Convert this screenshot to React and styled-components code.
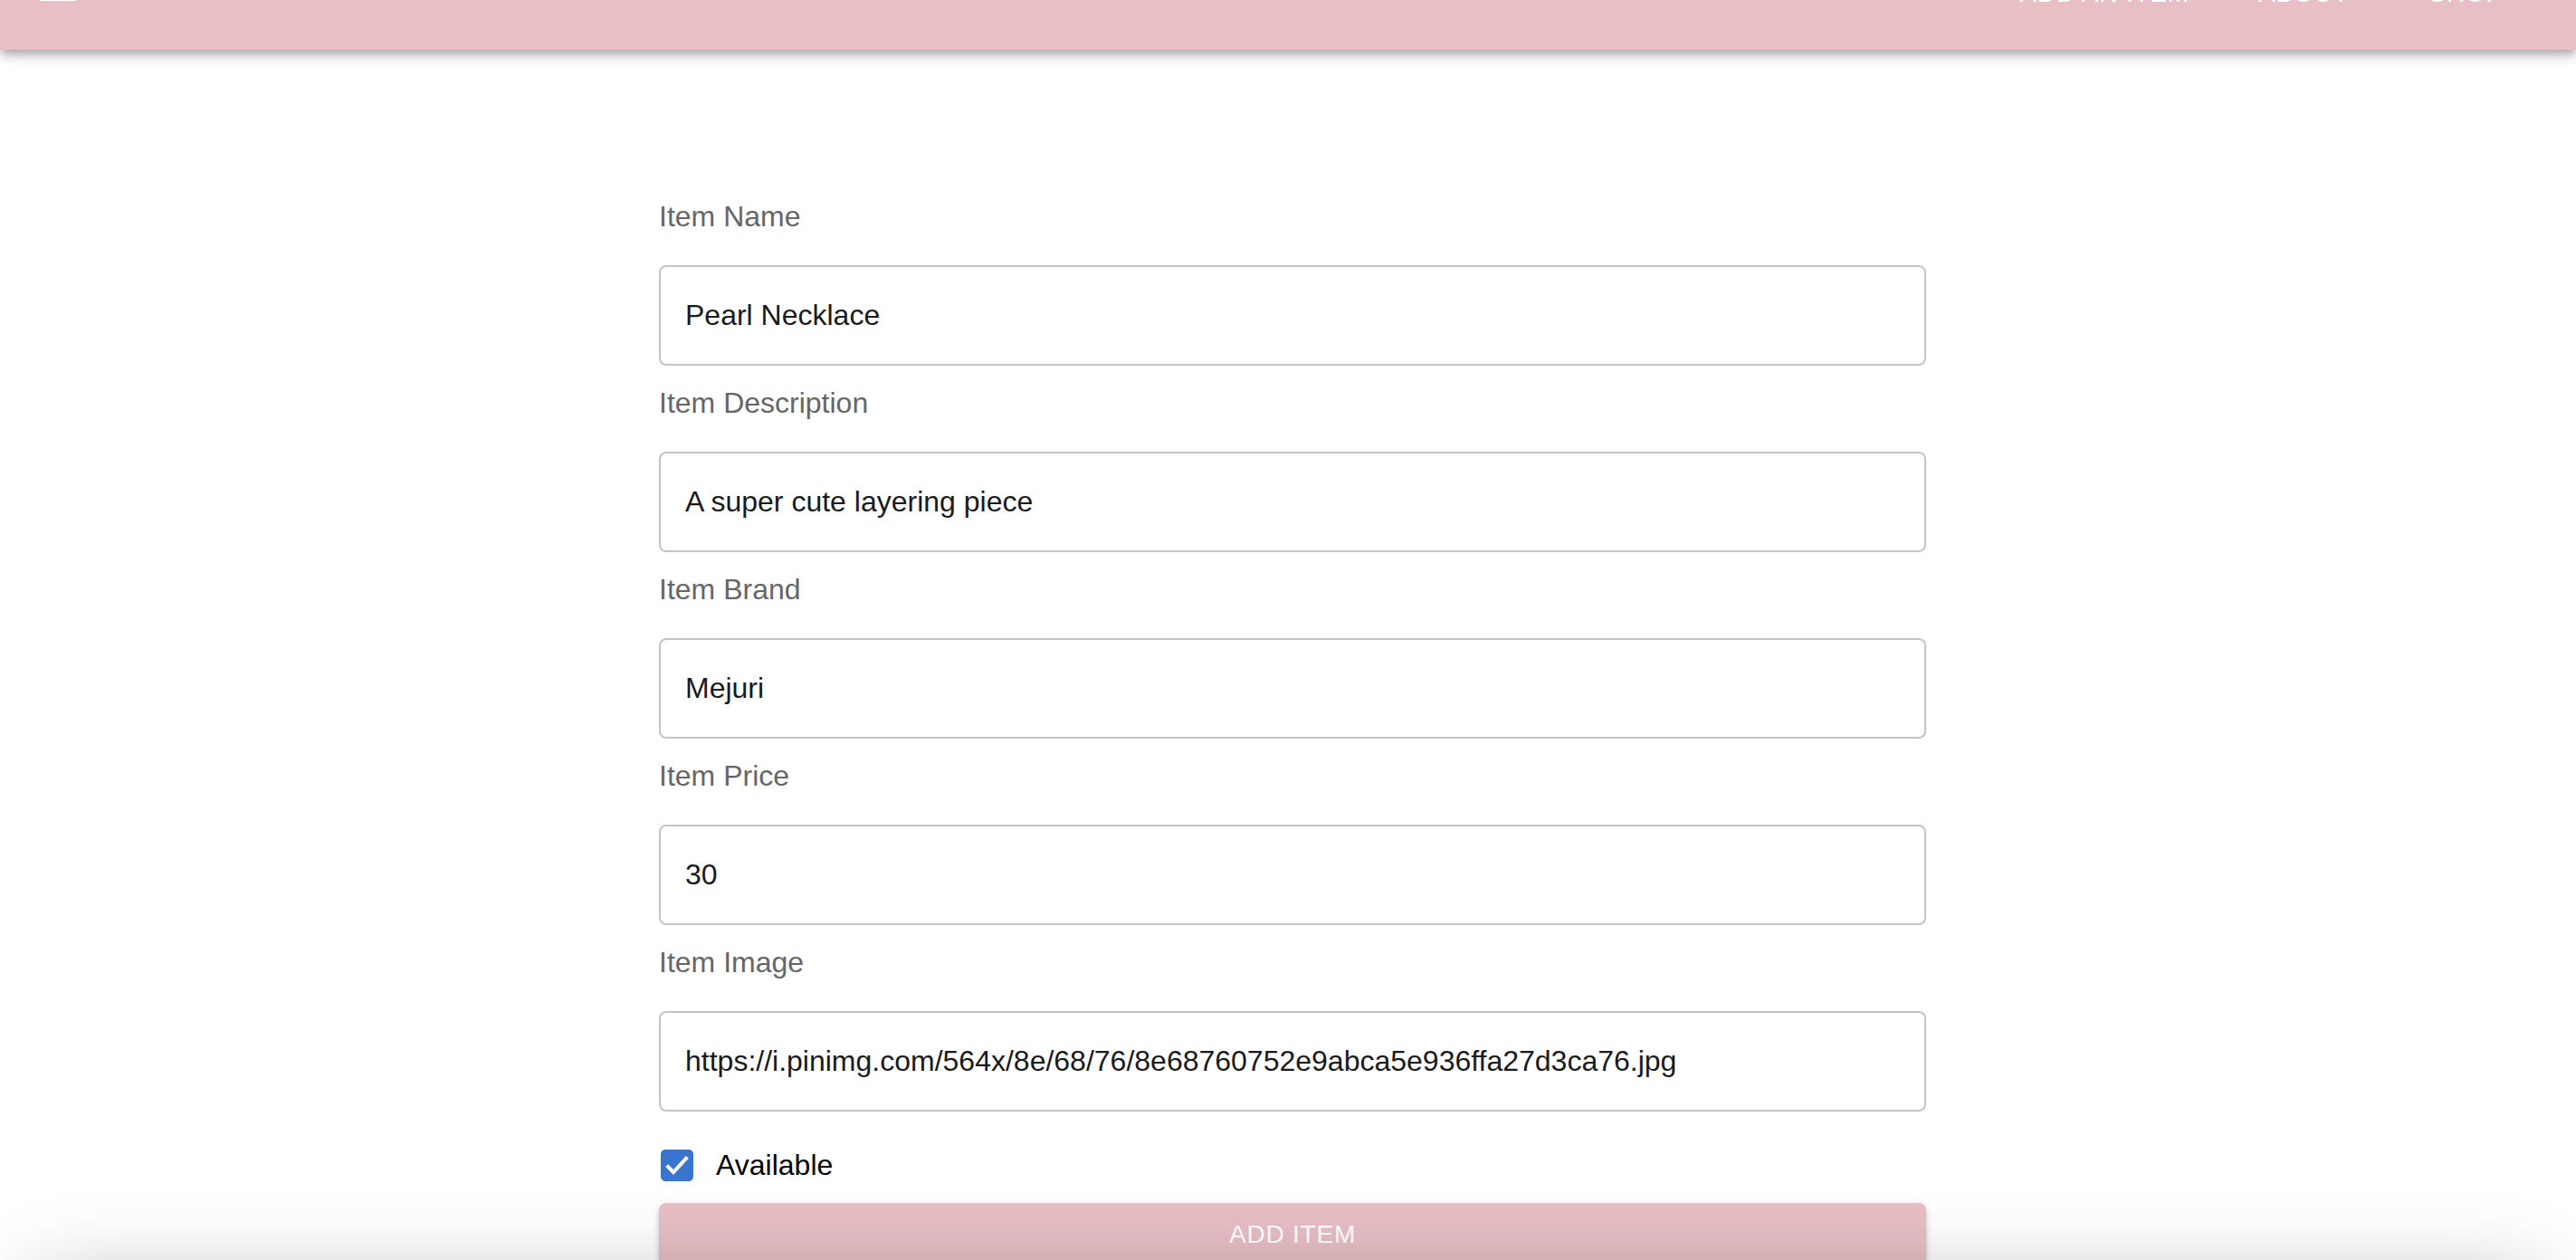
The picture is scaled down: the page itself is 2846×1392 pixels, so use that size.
import React from 'react'
import styled, { createGlobalStyle } from 'styled-components'

const pink = '#e7bfc5'
const gray = '#666666'

const Global = createGlobalStyle`
html, body {
    margin: 0;
    padding: 0;
    background: #fff;
}
body {
    font-family: "Liberation Sans", Arial, Helvetica, sans-serif;
}
* {
    box-sizing: border-box;
}
`

const Page = styled.div`
height: 100vh;
overflow: hidden;
background: #fff;
`

const NavBar = styled.header`
position: relative;
z-index: 2;
height: 128px;
margin-top: -73px;
background: ${pink};
display: flex;
align-items: center;
padding: 0 80px 0 40px;
box-shadow: 0 4px 8px -2px rgba(0, 0, 0, 0.2), 0 8px 10px 0 rgba(0, 0, 0, 0.14), 0 2px 20px 0 rgba(0, 0, 0, 0.12);
`

const MenuIcon = styled.svg`
width: 48px;
height: 48px;
flex: none;
`

const Links = styled.nav`
margin-left: auto;
display: flex;
align-items: center;
padding-top: 4px;
`

const NavItem = styled.a`
color: #fff;
text-decoration: none;
text-transform: uppercase;
font-size: 28px;
letter-spacing: 0.8px;
font-weight: 500;
margin-left: ${props => props.$space || 0}px;
line-height: 48px;
`

const Form = styled.form`
width: 1410px;
margin: 166px auto 0;
padding-left: 10px;
display: flex;
flex-direction: column;
`

const Field = styled.div`
display: flex;
flex-direction: column;
margin-bottom: 23px;
`

const Label = styled.label`
font-size: 32px;
line-height: 36px;
color: ${gray};
margin-bottom: 36px;
`

const Input = styled.input`
width: 100%;
height: 111px;
border: 2px solid #c4c4c4;
border-radius: 8px;
padding: 0 27px;
font-family: inherit;
font-size: 32px;
color: #1a1a1a;
background: #fff;
outline: none;
`

const CheckRow = styled.label`
display: flex;
align-items: center;
height: 84px;
margin-top: -6px;
font-size: 32px;
color: #000;
`

const Box = styled.span`
width: 36px;
height: 35px;
margin-left: 2px;
margin-right: 25px;
border-radius: 5px;
background: ${props => (props.$on ? '#3974cf' : '#fff')};
display: flex;
align-items: center;
justify-content: center;
`

const Submit = styled.button`
width: 100%;
height: 70px;
border: none;
border-radius: 8px;
background: ${pink};
color: #fff;
font-family: inherit;
font-size: 28px;
font-weight: 500;
letter-spacing: 0.8px;
text-transform: uppercase;
box-shadow: 0 6px 2px -4px rgba(0, 0, 0, 0.2), 0 4px 4px 0 rgba(0, 0, 0, 0.14), 0 2px 10px 0 rgba(0, 0, 0, 0.12);
`

const Footer = styled.footer`
position: relative;
z-index: 1;
width: calc(100% - 80px);
height: 200px;
margin: 22px auto 0;
background: #fff;
box-shadow: 0 0 100px rgba(0, 0, 0, 0.3);
`

const fields = [
    { label: 'Item Name', value: 'Pearl Necklace' },
    { label: 'Item Description', value: 'A super cute layering piece' },
    { label: 'Item Brand', value: 'Mejuri' },
    { label: 'Item Price', value: '30' },
    { label: 'Item Image', value: 'https://i.pinimg.com/564x/8e/68/76/8e68760752e9abca5e936ffa27d3ca76.jpg' },
]

const App = () => {
    return (
        <Page>
            <Global />
            <NavBar>
                <MenuIcon viewBox="0 0 48 48">
                    <rect x="4" y="10" width="40" height="4" fill="#fff" />
                    <rect x="4" y="20" width="40" height="4" fill="#fff" />
                    <rect x="4" y="30" width="40" height="4" fill="#fff" />
                </MenuIcon>
                <Links>
                    <NavItem href="#">Add an item</NavItem>
                    <NavItem href="#" $space={76}>About</NavItem>
                    <NavItem href="#" $space={88}>Shop</NavItem>
                </Links>
            </NavBar>
            <Form onSubmit={e => e.preventDefault()}>
                {fields.map(f => (
                    <Field key={f.label}>
                        <Label>{f.label}</Label>
                        <Input defaultValue={f.value} />
                    </Field>
                ))}
                <CheckRow>
                    <Box $on>
                        <svg width="32" height="32" viewBox="0 0 24 24">
                            <path d="M3.5 12.5l5.5 5.5L20.5 5.5" fill="none" stroke="#fff" strokeWidth="3" />
                        </svg>
                    </Box>
                    Available
                </CheckRow>
                <Submit type="submit">Add Item</Submit>
            </Form>
            <Footer />
        </Page>
    )
}

export default App
